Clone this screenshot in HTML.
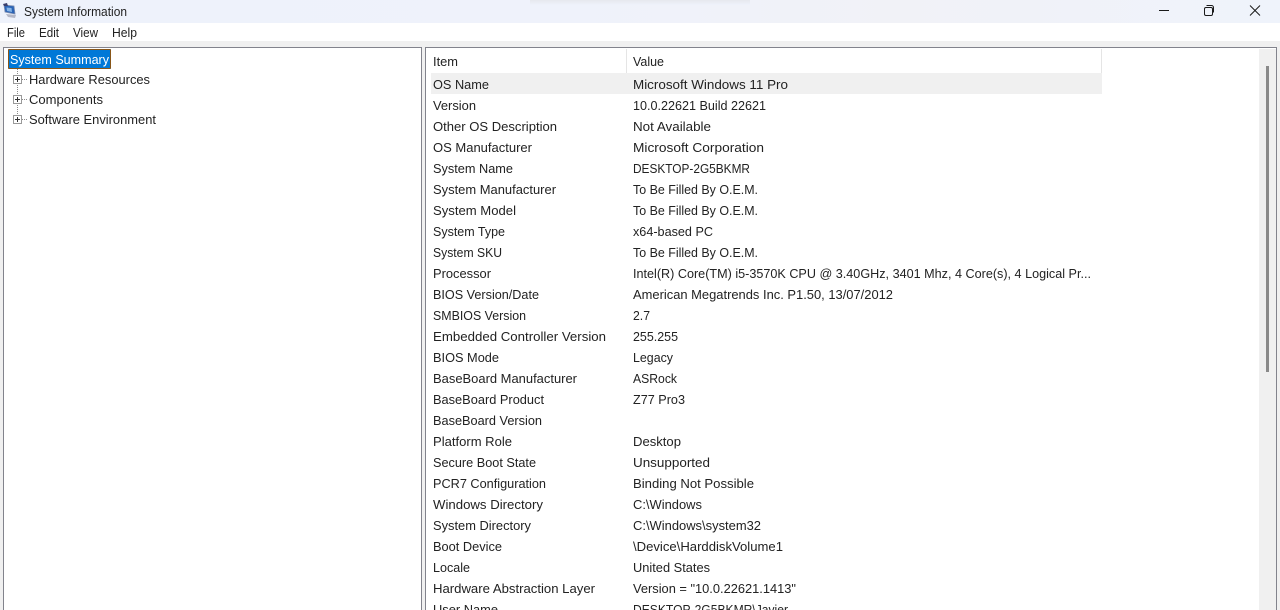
<!DOCTYPE html>
<html><head><meta charset="utf-8"><title>System Information</title>
<style>
html,body{margin:0;padding:0;width:1280px;height:610px;overflow:hidden;background:#fff}
svg{display:block}
text{font-family:"Liberation Sans",sans-serif;font-size:13px;fill:#222}
</style></head><body>
<svg width="1280" height="610" viewBox="0 0 1280 610" xmlns="http://www.w3.org/2000/svg">
<defs><linearGradient id="tb" x1="0" x2="1" y1="0" y2="0"><stop offset="0" stop-color="#eef2fb"/><stop offset=".45" stop-color="#eff2fb"/><stop offset=".7" stop-color="#f1f2f7"/><stop offset="1" stop-color="#eff3fb"/></linearGradient>
<linearGradient id="sh" x1="0" x2="0" y1="0" y2="1"><stop offset="0" stop-color="#e6e8ee"/><stop offset="1" stop-color="#eff2fb"/></linearGradient></defs>
<rect width="1280" height="23" fill="url(#tb)"/>
<rect x="530" y="0" width="220" height="5" fill="url(#sh)"/>
<rect y="23" width="1280" height="18" fill="#fff"/>
<rect y="41" width="1280" height="569" fill="#f0f0f0"/>
<!-- app icon -->
<path d="M6 14l10 1-1 3-7-1z" fill="#b4b7c6"/>
<path d="M4 5l10 1 1 8-10-2z" fill="#2b64b6" stroke="#7d8db0" stroke-width=".8"/>
<path d="M6.500 7.500l5 .5.500 4-5-1z" fill="#86b4e6"/>
<path d="M3 4l4-1 1 3H4z" fill="#3a3f6c"/>
<!-- panels -->
<rect x="3.5" y="47.5" width="418" height="563" fill="#fff" stroke="#82838c"/>
<rect x="425.5" y="47.5" width="851" height="563" fill="#fff" stroke="#82838c"/>
<rect x="1259" y="49" width="17" height="561" fill="#f0f0f0"/>
<rect x="1266" y="66" width="3" height="306" fill="#8a8a8a"/>
<!-- window controls -->
<path d="M1159 10.500h10" stroke="#1a1a1a" fill="none"/>
<rect x="1204.500" y="7.500" width="8" height="8" rx="1.500" fill="none" stroke="#1a1a1a"/>
<path d="M1206.500 5.500h5a2 2 0 0 1 2 2v5" fill="none" stroke="#1a1a1a"/>
<path d="M1250 5.500l10 10M1260 5.500l-10 10" stroke="#1a1a1a" fill="none"/>
<!-- title + menu -->
<text x="24" y="16" textLength="103" lengthAdjust="spacingAndGlyphs">System Information</text>
<text x="7" y="37" textLength="18" lengthAdjust="spacingAndGlyphs">File</text>
<text x="39" y="37" textLength="20" lengthAdjust="spacingAndGlyphs">Edit</text>
<text x="73" y="37" textLength="25" lengthAdjust="spacingAndGlyphs">View</text>
<text x="112" y="37" textLength="25" lengthAdjust="spacingAndGlyphs">Help</text>
<!-- tree -->
<rect x="9" y="50" width="101" height="18" fill="#0078d7"/>
<rect x="8.500" y="49.500" width="102" height="19" fill="none" stroke="#ff9a1f" stroke-dasharray="1 1"/>
<rect x="8.500" y="49.500" width="102" height="19" fill="none" stroke="#111" stroke-dasharray="1 1" stroke-dashoffset="1"/>
<text x="10" y="64" textLength="99" lengthAdjust="spacingAndGlyphs" style="fill:#fff">System Summary</text>
<path d="M17.500 69v50" stroke="#8a8a8a" stroke-dasharray="1 1" fill="none"/>
<path d="M22 79.500h5M22 99.500h5M22 119.500h5" stroke="#8a8a8a" stroke-dasharray="1 1" fill="none"/>
<g fill="#fff" stroke="#9a9a9a">
<rect x="13.500" y="75.500" width="8" height="8"/><rect x="13.500" y="95.500" width="8" height="8"/><rect x="13.500" y="115.500" width="8" height="8"/></g>
<path d="M15 79.500h5M17.500 77v5M15 99.500h5M17.500 97v5M15 119.500h5M17.500 117v5" stroke="#333" fill="none"/>
<text x="29" y="84" textLength="121" lengthAdjust="spacingAndGlyphs">Hardware Resources</text>
<text x="29" y="104" textLength="74" lengthAdjust="spacingAndGlyphs">Components</text>
<text x="29" y="124" textLength="127" lengthAdjust="spacingAndGlyphs">Software Environment</text>
<!-- list -->
<rect x="626" y="49" width="1" height="24" fill="#e5e5e5"/>
<rect x="1101" y="49" width="1" height="24" fill="#e5e5e5"/>
<rect x="431" y="73" width="671" height="21" fill="#f0f0f0"/>
<text x="433" y="66" textLength="25" lengthAdjust="spacingAndGlyphs">Item</text>
<text x="633" y="66" textLength="31" lengthAdjust="spacingAndGlyphs">Value</text>
<g>
<text x="433" y="89" textLength="56" lengthAdjust="spacingAndGlyphs">OS Name</text><text x="633" y="89" textLength="155" lengthAdjust="spacingAndGlyphs">Microsoft Windows 11 Pro</text>
<text x="433" y="110" textLength="43" lengthAdjust="spacingAndGlyphs">Version</text><text x="633" y="110" textLength="133" lengthAdjust="spacingAndGlyphs">10.0.22621 Build 22621</text>
<text x="433" y="131" textLength="124" lengthAdjust="spacingAndGlyphs">Other OS Description</text><text x="633" y="131" textLength="78" lengthAdjust="spacingAndGlyphs">Not Available</text>
<text x="433" y="152" textLength="99" lengthAdjust="spacingAndGlyphs">OS Manufacturer</text><text x="633" y="152" textLength="131" lengthAdjust="spacingAndGlyphs">Microsoft Corporation</text>
<text x="433" y="173" textLength="80" lengthAdjust="spacingAndGlyphs">System Name</text><text x="633" y="173" textLength="117" lengthAdjust="spacingAndGlyphs">DESKTOP-2G5BKMR</text>
<text x="433" y="194" textLength="123" lengthAdjust="spacingAndGlyphs">System Manufacturer</text><text x="633" y="194" textLength="125" lengthAdjust="spacingAndGlyphs">To Be Filled By O.E.M.</text>
<text x="433" y="215" textLength="83" lengthAdjust="spacingAndGlyphs">System Model</text><text x="633" y="215" textLength="125" lengthAdjust="spacingAndGlyphs">To Be Filled By O.E.M.</text>
<text x="433" y="236" textLength="72" lengthAdjust="spacingAndGlyphs">System Type</text><text x="633" y="236" textLength="80" lengthAdjust="spacingAndGlyphs">x64-based PC</text>
<text x="433" y="257" textLength="69" lengthAdjust="spacingAndGlyphs">System SKU</text><text x="633" y="257" textLength="125" lengthAdjust="spacingAndGlyphs">To Be Filled By O.E.M.</text>
<text x="433" y="278" textLength="58" lengthAdjust="spacingAndGlyphs">Processor</text><text x="633" y="278" textLength="458" lengthAdjust="spacingAndGlyphs">Intel(R) Core(TM) i5-3570K CPU @ 3.40GHz, 3401 Mhz, 4 Core(s), 4 Logical Pr...</text>
<text x="433" y="299" textLength="106" lengthAdjust="spacingAndGlyphs">BIOS Version/Date</text><text x="633" y="299" textLength="260" lengthAdjust="spacingAndGlyphs">American Megatrends Inc. P1.50, 13/07/2012</text>
<text x="433" y="320" textLength="93" lengthAdjust="spacingAndGlyphs">SMBIOS Version</text><text x="633" y="320" textLength="17" lengthAdjust="spacingAndGlyphs">2.7</text>
<text x="433" y="341" textLength="173" lengthAdjust="spacingAndGlyphs">Embedded Controller Version</text><text x="633" y="341" textLength="45" lengthAdjust="spacingAndGlyphs">255.255</text>
<text x="433" y="362" textLength="66" lengthAdjust="spacingAndGlyphs">BIOS Mode</text><text x="633" y="362" textLength="40" lengthAdjust="spacingAndGlyphs">Legacy</text>
<text x="433" y="383" textLength="144" lengthAdjust="spacingAndGlyphs">BaseBoard Manufacturer</text><text x="633" y="383" textLength="44" lengthAdjust="spacingAndGlyphs">ASRock</text>
<text x="433" y="404" textLength="111" lengthAdjust="spacingAndGlyphs">BaseBoard Product</text><text x="633" y="404" textLength="52" lengthAdjust="spacingAndGlyphs">Z77 Pro3</text>
<text x="433" y="425" textLength="109" lengthAdjust="spacingAndGlyphs">BaseBoard Version</text>
<text x="433" y="446" textLength="79" lengthAdjust="spacingAndGlyphs">Platform Role</text><text x="633" y="446" textLength="48" lengthAdjust="spacingAndGlyphs">Desktop</text>
<text x="433" y="467" textLength="103" lengthAdjust="spacingAndGlyphs">Secure Boot State</text><text x="633" y="467" textLength="77" lengthAdjust="spacingAndGlyphs">Unsupported</text>
<text x="433" y="488" textLength="113" lengthAdjust="spacingAndGlyphs">PCR7 Configuration</text><text x="633" y="488" textLength="121" lengthAdjust="spacingAndGlyphs">Binding Not Possible</text>
<text x="433" y="509" textLength="110" lengthAdjust="spacingAndGlyphs">Windows Directory</text><text x="633" y="509" textLength="69" lengthAdjust="spacingAndGlyphs">C:\Windows</text>
<text x="433" y="530" textLength="98" lengthAdjust="spacingAndGlyphs">System Directory</text><text x="633" y="530" textLength="128" lengthAdjust="spacingAndGlyphs">C:\Windows\system32</text>
<text x="433" y="551" textLength="69" lengthAdjust="spacingAndGlyphs">Boot Device</text><text x="633" y="551" textLength="150" lengthAdjust="spacingAndGlyphs">\Device\HarddiskVolume1</text>
<text x="433" y="572" textLength="37" lengthAdjust="spacingAndGlyphs">Locale</text><text x="633" y="572" textLength="77" lengthAdjust="spacingAndGlyphs">United States</text>
<text x="433" y="593" textLength="162" lengthAdjust="spacingAndGlyphs">Hardware Abstraction Layer</text><text x="633" y="593" textLength="163" lengthAdjust="spacingAndGlyphs">Version = "10.0.22621.1413"</text>
<text x="433" y="614" textLength="65" lengthAdjust="spacingAndGlyphs">User Name</text><text x="633" y="614" textLength="155" lengthAdjust="spacingAndGlyphs">DESKTOP-2G5BKMR\Javier</text>
</g>
</svg>
</body></html>
